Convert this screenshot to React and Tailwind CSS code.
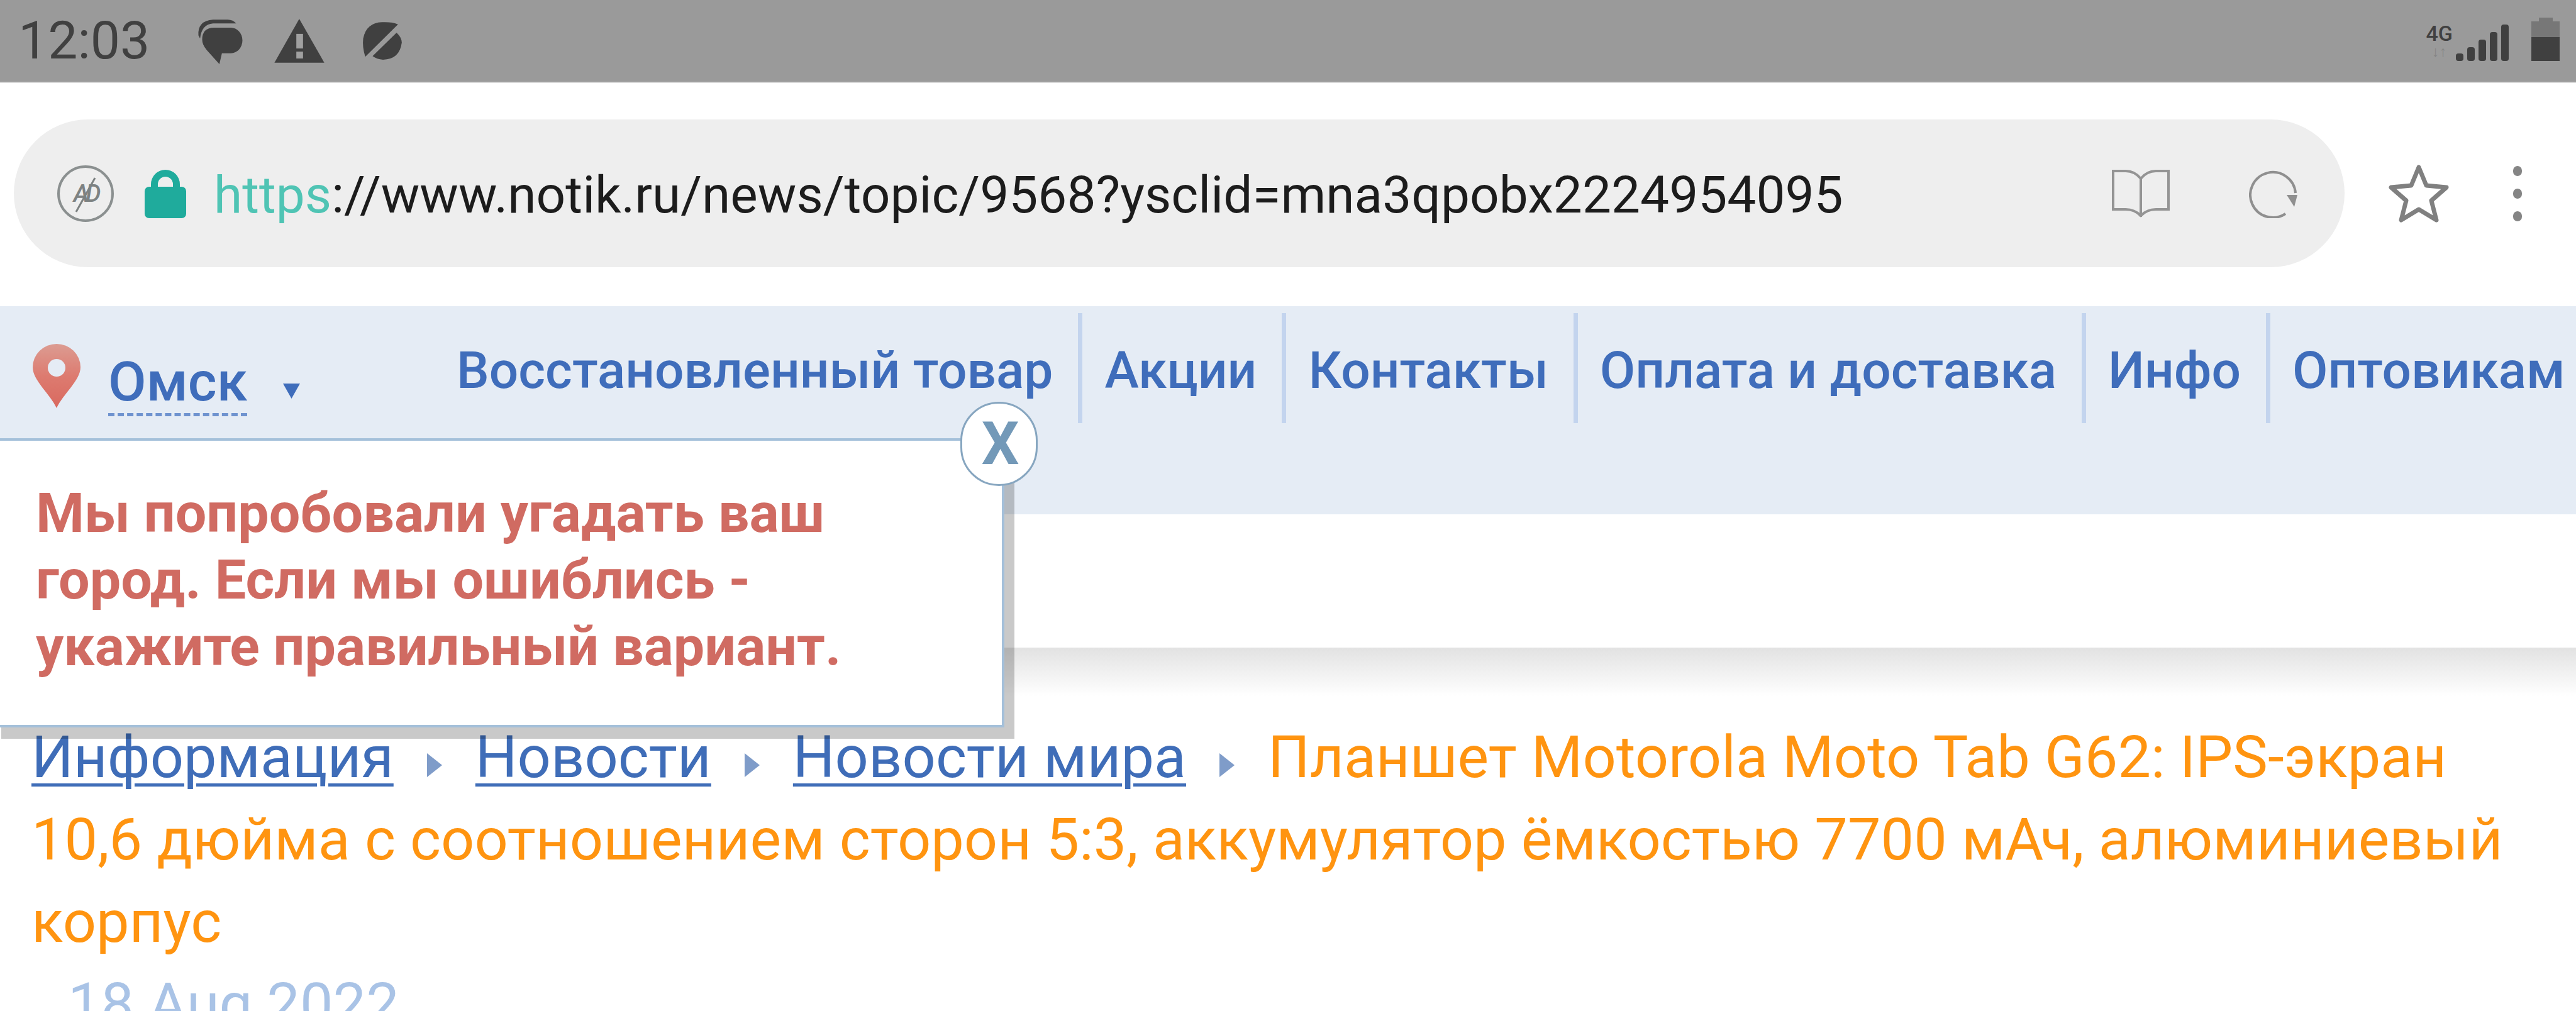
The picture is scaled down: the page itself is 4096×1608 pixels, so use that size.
import { useId } from 'react';

const navLinks = ['Восстановленный товар', 'Акции', 'Контакты', 'Оплата и доставка', 'Инфо', 'Оптовикам'];

const ChatIcon = () => (
  <svg viewBox="50 40 230 225" className="w-[77px] h-[75px] fill-[#404040]">
    <path d="M135 88H215a55 61 0 0 1 0 122H172L160 262L100 195Q78 170 78 145Q78 88 135 88Z" />
    <path d="M60 125Q55 55 130 50H200Q225 50 240 68H130Q75 72 68 140Z" />
  </svg>
);

const WarningIcon = () => (
  <svg viewBox="425 35 245 220" className="w-[82px] h-[73px]">
    <path d="M547 38L667 248H428Z" fill="#404040" />
    <rect x="533" y="110" width="32" height="70" fill="#a0a0a0" />
    <rect x="533" y="195" width="32" height="33" fill="#a0a0a0" />
  </svg>
);

const DndIcon = () => (
  <svg viewBox="838 58 198 190" className="w-[66px] h-[63px] fill-[#404040]">
    <path d="M1012 72L855 228Q840 180 845 140Q860 65 935 62Q985 60 1012 72Z" />
    <path d="M1005 112Q1030 135 1030 160Q1020 240 940 242Q910 240 890 225Z" />
  </svg>
);

const AdIcon = () => (
  <svg viewBox="0 0 94 94" className="w-[94px] h-[94px]">
    <circle cx="47" cy="47" r="43" fill="none" stroke="#8b9090" strokeWidth="4" />
    <text x="47" y="60" textAnchor="middle" fontFamily="Roboto, sans-serif" fontStyle="italic" fontWeight="500" fontSize="38" fill="#7d8282" letterSpacing="-5">AD</text>
    <path d="M32 76L62 22" stroke="#7d8282" strokeWidth="3" />
  </svg>
);

const LockIcon = () => (
  <svg viewBox="0 0 66 78" className="w-[66px] h-[78px] fill-[#1fab9c]">
    <path d="M10 30V24a23 23 0 0 1 46 0V30H45V24a12 12 0 0 0-24 0V30Z" />
    <rect x="0" y="28" width="66" height="50" rx="7" />
  </svg>
);

const BookIcon = () => (
  <svg viewBox="0 0 92 78" className="w-[92px] h-[78px] fill-none stroke-[#949494]" strokeWidth="4">
    <path d="M46 15V76M46 15Q36 3 22 3H2V64H22Q36 64 46 74Q56 64 70 64H90V3H70Q56 3 46 15Z" />
  </svg>
);

const ReloadIcon = () => (
  <svg viewBox="0 0 78 78" className="w-[78px] h-[78px]">
    <path d="M58 71A36 36 0 1 1 74 38" fill="none" stroke="#8f8f8f" strokeWidth="4" />
    <path d="M60 41H77L72 60Z" fill="#8f8f8f" />
  </svg>
);

const StarIcon = () => (
  <svg viewBox="0 0 96 92" className="w-[96px] h-[92px] fill-none stroke-[#808080]" strokeWidth="7" strokeLinejoin="round">
    <path d="M48 4L60 33L92 36L68 57L76 88L48 71L20 88L28 57L4 36L36 33Z" />
  </svg>
);

const PinIcon = () => {
  const gradientId = useId();
  return (
    <svg viewBox="0 0 76 102" className="w-[76px] h-[102px]">
      <defs>
        <linearGradient id={gradientId} x1="0" y1="0" x2="0" y2="1">
          <stop offset="0" stopColor="#dc9c92" />
          <stop offset="0.5" stopColor="#dd7b70" />
          <stop offset="1" stopColor="#d9695f" />
        </linearGradient>
      </defs>
      <path d="M38 102C28 80 0 58 0 37A38 37 0 0 1 76 37C76 58 48 80 38 102Z" fill={`url(#${gradientId})`} />
      <circle cx="38" cy="38" r="14" fill="#e5ecf5" />
    </svg>
  );
};

const Crumb = ({ children }) => (
  <a className="text-[#3f6db8] underline decoration-[5px] underline-offset-[10px]">{children}</a>
);

const CrumbArrow = () => (
  <svg viewBox="0 0 24 38" className="inline-block w-[24px] h-[38px] mx-[53px] align-baseline">
    <path d="M0 0L24 19L0 38Z" fill="#7f9cc9" />
  </svg>
);

export default function App() {
  return (
    <div className="relative w-[4096px] h-[1608px] overflow-hidden bg-white font-['Roboto',sans-serif]">
      {/* Status bar */}
      <div className="flex items-center h-[132px] bg-[#9a9a9a] border-b-2 border-[#d8d8d8] pl-[29px] pr-[26px] text-[#404040]">
        <span className="text-[84px] leading-none mr-[74px]">12:03</span>
        <ChatIcon />
        <div className="ml-[46px]"><WarningIcon /></div>
        <div className="ml-[58px]"><DndIcon /></div>
        <div className="ml-auto flex items-end h-[64px]">
          <div className="flex flex-col items-center h-[58px] mr-[5px]">
            <span className="text-[34px] leading-[28px] font-medium">4G</span>
            <span className="text-[24px] leading-[30px] text-[#858585]">↓↑</span>
          </div>
          <div className="flex items-end gap-[6px] h-[58px] mr-[36px]">
            <div className="w-[12px] h-[12px] rounded-sm bg-[#404040]" />
            <div className="w-[12px] h-[22px] rounded-sm bg-[#404040]" />
            <div className="w-[12px] h-[34px] rounded-sm bg-[#404040]" />
            <div className="w-[12px] h-[46px] rounded-sm bg-[#404040]" />
            <div className="w-[12px] h-[58px] rounded-sm bg-[#404040]" />
          </div>
          <div className="flex flex-col items-center">
            <div className="w-[22px] h-[6px] bg-[#777777]" />
            <div className="w-[45px] h-[25px] bg-[#777777]" />
            <div className="w-[45px] h-[38px] bg-[#404040]" />
          </div>
        </div>
      </div>

      {/* Address bar */}
      <div className="flex items-center h-[355px] pl-[22px] pb-[4px]">
        <div className="flex items-center w-[3706px] h-[235px] rounded-full bg-[#eeeeee] pl-[67px] pr-[74px]">
          <AdIcon />
          <div className="ml-[47px]"><LockIcon /></div>
          <span className="ml-[44px] mt-[4px] text-[82px] leading-none text-[#1c1c1c]">
            <span className="text-[#4fc4b4]">https</span>://www.notik.ru/news/topic/9568?ysclid=mna3qpobx2224954095
          </span>
          <div className="ml-auto flex items-center gap-[126px]">
            <BookIcon />
            <ReloadIcon />
          </div>
        </div>
        <div className="ml-[70px]"><StarIcon /></div>
        <div className="ml-[102px] flex flex-col gap-[20px]">
          <div className="w-[14px] h-[16px] rounded-full bg-[#858585]" />
          <div className="w-[14px] h-[16px] rounded-full bg-[#858585]" />
          <div className="w-[14px] h-[16px] rounded-full bg-[#858585]" />
        </div>
      </div>

      {/* Nav */}
      <div className="flex items-start h-[331px] bg-[#e5ecf5] pt-[11px] pl-[52px] whitespace-nowrap">
        <div className="flex items-start w-[674px] pt-[49px]">
          <PinIcon />
          <a className="ml-[44px] mt-[9px] text-[88px] leading-[101px] font-medium text-[#3f6dbb] border-b-[5px] border-dashed border-[#6f93cf]">Омск</a>
          <svg viewBox="0 0 27 24" className="ml-[57px] mt-[63px] w-[27px] h-[24px]">
            <path d="M0 0H27L13.500 24Z" fill="#3f6dbb" />
          </svg>
        </div>
        {navLinks.map((link, i) => (
          <a
            key={link}
            className={`flex items-start h-[175px] pt-[41px] text-[82px] leading-[100px] font-medium text-[#3f6dbb] ${i < navLinks.length - 1 ? 'border-r-[7px] border-[#c3d4ee] pr-[40px] mr-[35px]' : ''}`}
          >
            {link}
          </a>
        ))}
      </div>

      {/* White area under the nav, then the header's shadow */}
      <div className="h-[212px]" />
      <div className="h-[77px] bg-gradient-to-b from-[#e2e2e2] to-white" />

      {/* Breadcrumbs */}
      <div className="pt-[32px] pl-[50px] pr-[52px] text-[93.6px] leading-[131px] text-[#ff9410]">
        <Crumb>Информация</Crumb>
        <CrumbArrow />
        <Crumb>Новости</Crumb>
        <CrumbArrow />
        <Crumb>Новости мира</Crumb>
        <CrumbArrow />
        Планшет Motorola Moto Tab G62: IPS-экран 10,6 дюйма с соотношением сторон 5:3, аккумулятор ёмкостью 7700 мАч, алюминиевый корпус
      </div>
      <div className="pl-[108px] text-[93.6px] leading-[131px] text-[#a9c3e6]">18 Aug 2022</div>

      {/* City popup */}
      <div className="absolute left-[-14px] top-[697px] w-[1611px] h-[460px] bg-white border-4 border-[#a4c0da] shadow-[16px_18px_0_rgba(0,0,0,0.21)] pl-[67px] pt-[62px]">
        <p className="text-[88px] leading-[106px] font-bold text-[#d06b62] whitespace-nowrap">
          Мы попробовали угадать ваш<br />
          город. Если мы ошиблись -<br />
          укажите правильный вариант.
        </p>
        <button className="absolute right-[-57px] top-[-62px] flex items-center justify-center w-[123px] h-[134px] pl-[4px] rounded-full bg-white border-[3px] border-[#87a6c0] text-[94px] font-bold leading-none text-[#7399b8]">
          X
        </button>
      </div>
    </div>
  );
}
